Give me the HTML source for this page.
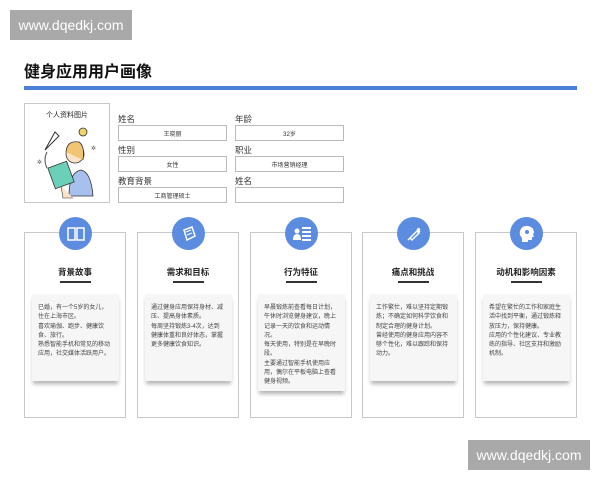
<!DOCTYPE html>
<html><head><meta charset="utf-8"><style>
*{margin:0;padding:0;box-sizing:border-box}
body{width:600px;height:480px;background:#fff;position:relative;overflow:hidden;font-family:"Liberation Sans","Noto Sans CJK SC",sans-serif;color:#222}
.wm{position:absolute;background:#a9a9a9;color:#fff;font-size:14px;display:flex;align-items:center;justify-content:center}
.a{position:absolute}
.lbl{position:absolute;font-size:8.5px;color:#333}
.box{position:absolute;width:109px;height:16px;border:1px solid #bbb;font-size:6px;display:flex;align-items:center;justify-content:center;color:#333}
.card{position:absolute;top:232px;width:102px;height:186px;border:1px solid #c8c8c8}
.circ{position:absolute;left:34px;top:-16px;width:33px;height:33px;border-radius:50%;background:#5b8ce0;display:flex;align-items:center;justify-content:center}
.h{position:absolute;top:33px;width:100%;text-align:center;font-size:8.5px;font-weight:bold}
.ul{position:absolute;top:48px;left:35px;width:31px;height:1.5px;background:#333}
.in{position:absolute;left:7px;top:61px;width:87px;height:87px;background:#f6f6f6;box-shadow:0 4px 4px -1px rgba(0,0,0,.3);font-size:6px;line-height:9.3px;padding:10px 9px 0 6px;color:#444}
</style></head><body>
<div class="wm" style="left:10px;top:10px;width:122px;height:30px">www.dqedkj.com</div>
<div class="wm" style="left:468px;top:440px;width:122px;height:30px">www.dqedkj.com</div>
<div class="a" style="left:24px;top:58px;font-size:16px;font-weight:bold;color:#111">健身应用用户画像</div>
<div class="a" style="left:24px;top:86px;width:553px;height:4px;background:#4a7fd6"></div>
<div class="a" style="left:24px;top:103px;width:86px;height:100px;border:1px solid #c8c8c8">
<div style="text-align:center;font-size:7px;margin-top:6px">个人资料图片</div>
<svg width="84" height="80" viewBox="0 0 84 80" style="position:absolute;left:0;top:16px">
<path d="M20 30 L30 12 L34 16 Z" fill="#fff" stroke="#333" stroke-width="1"/>
<path d="M22 32 Q18 40 22 48" stroke="#555" fill="none"/>
<circle cx="58" cy="12" r="4" fill="#f3d36b" stroke="#333" stroke-width=".8"/>
<path d="M44 76 Q44 52 56 50 Q66 52 68 76 Z" fill="#a8c0ee" stroke="#333" stroke-width=".8"/>
<circle cx="50" cy="34" r="9" fill="#fbe3c8" stroke="#333" stroke-width=".8"/>
<path d="M41 32 Q42 20 54 22 Q60 26 58 40" fill="#f2c572" stroke="#333" stroke-width=".8"/>
<rect x="26" y="44" width="20" height="22" transform="rotate(-20 36 55)" fill="#6ccfb7" stroke="#333" stroke-width=".8"/>
<path d="M36 66 L38 78 L48 78" fill="#fbe3c8" stroke="#333" stroke-width=".6"/>
<text x="12" y="44" font-size="6" fill="#555">✲</text><text x="66" y="30" font-size="6" fill="#555">✲</text>
</svg></div>
<div class="lbl" style="left:118px;top:113px">姓名</div><div class="box" style="left:118px;top:125px">王晓丽</div>
<div class="lbl" style="left:235px;top:113px">年龄</div><div class="box" style="left:235px;top:125px">32岁</div>
<div class="lbl" style="left:118px;top:144px">性别</div><div class="box" style="left:118px;top:156px">女性</div>
<div class="lbl" style="left:235px;top:144px">职业</div><div class="box" style="left:235px;top:156px">市场营销经理</div>
<div class="lbl" style="left:118px;top:175px">教育背景</div><div class="box" style="left:118px;top:187px">工商管理硕士</div>
<div class="lbl" style="left:235px;top:175px">姓名</div><div class="box" style="left:235px;top:187px"></div>

<div class="card" style="left:24px"><div class="circ"><svg width="18" height="14" viewBox="0 0 18 14"><path d="M1 1h7v12H1zM10 1h7v12h-7z" fill="none" stroke="#fff" stroke-width="1.5"/></svg></div>
<div class="h">背景故事</div><div class="ul"></div>
<div class="in">已婚，有一个5岁的女儿，住在上海市区。<br>喜欢瑜伽、跑步、健康饮食、旅行。<br>熟悉智能手机和常见的移动应用，社交媒体活跃用户。</div></div>

<div class="card" style="left:137px"><div class="circ"><svg width="16" height="16" viewBox="0 0 16 16"><path d="M3 4l8-3 3 9-8 4z" fill="none" stroke="#fff" stroke-width="1.5"/><path d="M5 6l5-2M6 9l5-2" stroke="#fff"/></svg></div>
<div class="h">需求和目标</div><div class="ul"></div>
<div class="in">通过健身应用保持身材、减压、提高身体素质。<br>每周坚持锻炼3-4次，达到健康体重和良好体态，掌握更多健康饮食知识。</div></div>

<div class="card" style="left:250px"><div class="circ"><svg width="18" height="16" viewBox="0 0 18 16"><circle cx="4" cy="5" r="2.5" fill="#fff"/><path d="M0 14q0-6 4-6t4 6z" fill="#fff"/><path d="M9 2h9M9 6h9M9 10h9M9 14h9" stroke="#fff" stroke-width="2"/></svg></div>
<div class="h">行为特征</div><div class="ul"></div>
<div class="in" style="height:97px">早晨锻炼前查看每日计划，午休时浏览健身建议，晚上记录一天的饮食和运动情况。<br>每天使用，特别是在早晚时段。<br>主要通过智能手机使用应用，偶尔在平板电脑上查看健身视频。</div></div>

<div class="card" style="left:362px"><div class="circ"><svg width="16" height="16" viewBox="0 0 16 16"><path d="M2 14l3-3M4 12l7-7 2 2-7 7zM11 3l3 3M12 2l2 2" stroke="#fff" stroke-width="1.5" fill="none"/></svg></div>
<div class="h">痛点和挑战</div><div class="ul"></div>
<div class="in">工作繁忙，难以坚持定期锻炼；不确定如何科学饮食和制定合理的健身计划。<br>曾经使用的健身应用内容不够个性化，难以跟踪和保持动力。</div></div>

<div class="card" style="left:475px"><div class="circ"><svg width="16" height="18" viewBox="0 0 16 18"><path d="M3 17v-4Q0 10 1 6 3 0 9 1q6 1 6 7l-1 1 1 3h-2v3h-4v2z" fill="#fff"/><circle cx="8" cy="7" r="2" fill="#5b8ce0"/></svg></div>
<div class="h">动机和影响因素</div><div class="ul"></div>
<div class="in">希望在繁忙的工作和家庭生活中找到平衡，通过锻炼释放压力，保持健康。<br>应用的个性化建议、专业教练的指导、社区支持和激励机制。</div></div>
</body></html>
